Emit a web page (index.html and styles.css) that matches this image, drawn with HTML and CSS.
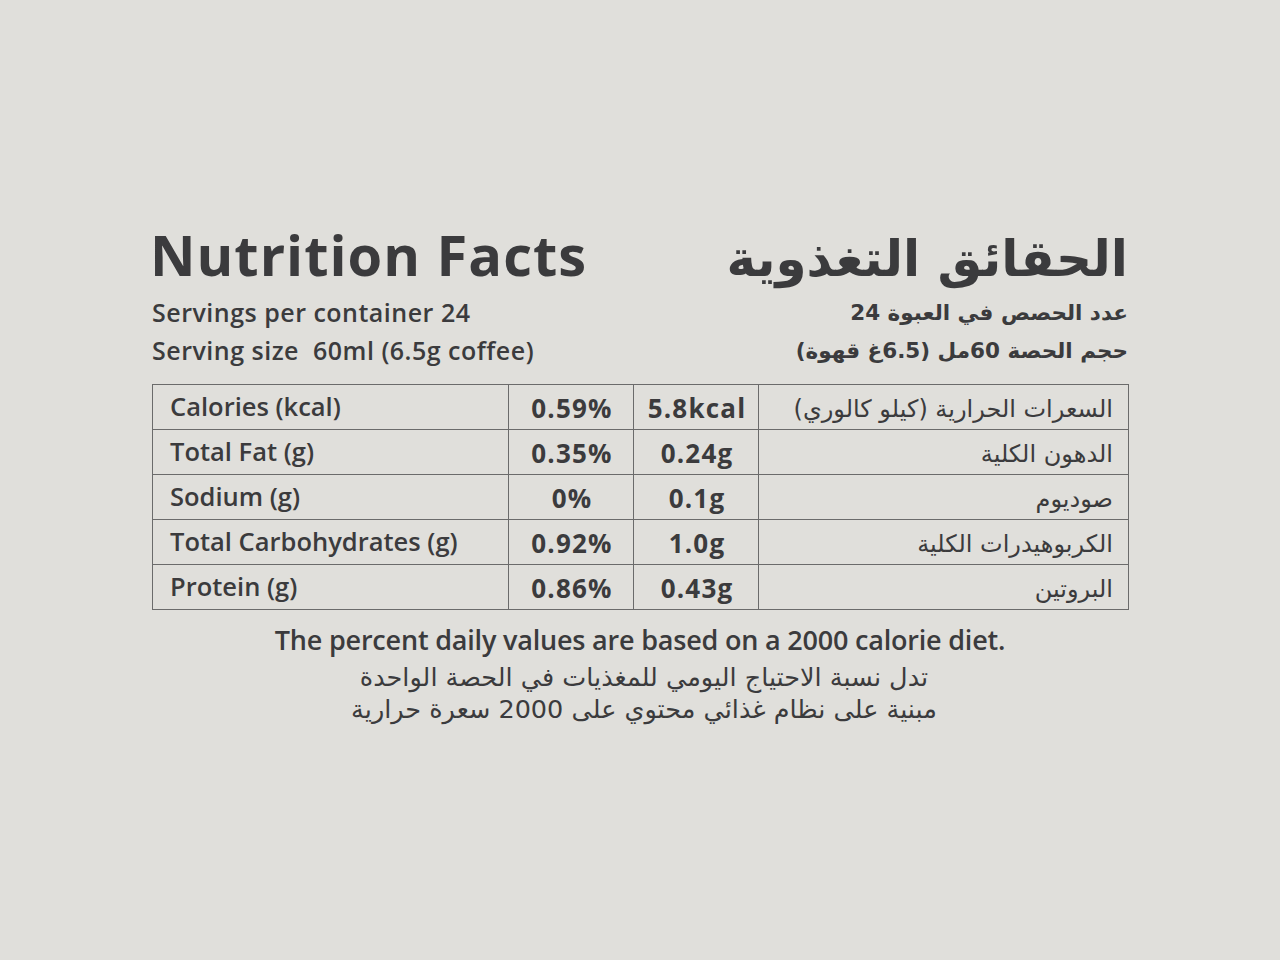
FILE: index.html
```html
<!DOCTYPE html>
<html lang="en">
<head>
<meta charset="utf-8">
<title>Nutrition Facts</title>
<link rel="stylesheet" href="styles.css">
</head>
<body>
<main class="label">
  <header class="head">
    <div class="head-en">
      <h1 class="title-en">Nutrition Facts</h1>
      <p class="sub-en first">Servings per container 24</p>
      <p class="sub-en">Serving size&nbsp; 60ml (6.5g coffee)</p>
    </div>
    <div class="head-ar" dir="rtl" lang="ar">
      <h2 class="title-ar">الحقائق التغذوية</h2>
      <p class="sub-ar first">عدد الحصص في العبوة 24</p>
      <p class="sub-ar">حجم الحصة 60مل (6.5غ قهوة)</p>
    </div>
  </header>

  <table class="facts">
    <colgroup>
      <col class="c-en"><col class="c-pct"><col class="c-val"><col class="c-ar">
    </colgroup>
    <tbody>
      <tr><td class="en">Calories (kcal)</td><td class="num">0.59%</td><td class="num">5.8kcal</td><td class="ar" dir="rtl" lang="ar">السعرات الحرارية (كيلو كالوري)</td></tr>
      <tr><td class="en">Total Fat (g)</td><td class="num">0.35%</td><td class="num">0.24g</td><td class="ar" dir="rtl" lang="ar">الدهون الكلية</td></tr>
      <tr><td class="en">Sodium (g)</td><td class="num">0%</td><td class="num">0.1g</td><td class="ar" dir="rtl" lang="ar">صوديوم</td></tr>
      <tr><td class="en">Total Carbohydrates (g)</td><td class="num">0.92%</td><td class="num">1.0g</td><td class="ar" dir="rtl" lang="ar">الكربوهيدرات الكلية</td></tr>
      <tr><td class="en">Protein (g)</td><td class="num">0.86%</td><td class="num">0.43g</td><td class="ar" dir="rtl" lang="ar">البروتين</td></tr>
    </tbody>
  </table>

  <footer class="note">
    <p class="note-en">The percent daily values are based on a 2000 calorie diet.</p>
    <p class="note-ar first" dir="rtl" lang="ar">تدل نسبة الاحتياج اليومي للمغذيات في الحصة الواحدة</p>
    <p class="note-ar" dir="rtl" lang="ar">مبنية على نظام غذائي محتوي على 2000 سعرة حرارية</p>
  </footer>
</main>
</body>
</html>
```

FILE: styles.css
```css
html, body {
  margin: 0;
  padding: 0;
  background: #e0dfdb;
}
body {
  width: 1280px;
  height: 960px;
  color: #3b3b3d;
  font-family: "Open Sans", "DejaVu Sans", sans-serif;
}
.label {
  width: 976px;
  margin: 0 0 0 152px;
  padding-top: 218px;
}
p, h1, h2 { margin: 0; }

.head {
  display: flex;
  justify-content: space-between;
  align-items: flex-start;
}
.title-en {
  font-size: 56px;
  font-weight: 700;
  line-height: 72px;
  letter-spacing: 1px;
  margin-left: -2px;
}
.sub-en {
  font-size: 25px;
  font-weight: 600;
  line-height: 38px;
  letter-spacing: 0.5px;
}
.sub-en.first { margin-top: 3px; }

.head-ar { text-align: right; }
.title-ar {
  font-family: "DejaVu Sans", sans-serif;
  font-size: 50px;
  font-weight: 700;
  line-height: 72px;
  margin-top: 5px;
}
.sub-ar {
  font-family: "DejaVu Sans", sans-serif;
  font-size: 21.5px;
  font-weight: 700;
  line-height: 38px;
}
.sub-ar.first { margin-top: -1px; }

.facts {
  margin-top: 14px;
  width: 976px;
  border-collapse: collapse;
  table-layout: fixed;
}
.c-en { width: 356px; }
.c-pct { width: 125px; }
.c-val { width: 125px; }
.c-ar { width: 370px; }
.facts td {
  box-sizing: border-box;
  border: 1.5px solid #6b6b6b;
  height: 45px;
  padding: 0 16px 0;
  line-height: 30px;
  vertical-align: middle;
  white-space: nowrap;
}
.facts .en {
  font-size: 25.5px;
  font-weight: 600;
  padding-left: 17px;
  padding-bottom: 2px;
}
.facts .num {
  text-align: center;
  font-size: 26px;
  font-weight: 700;
  letter-spacing: 1.2px;
  padding-left: 4px;
  padding-right: 2px;
  padding-top: 2px;
}
.facts .ar {
  text-align: right;
  font-family: "DejaVu Sans", sans-serif;
  font-size: 24px;
  font-weight: 400;
  padding-top: 4px;
  padding-right: 15px;
}

.note {
  text-align: center;
  margin-top: 13px;
}
.note-en {
  font-size: 27px;
  font-weight: 600;
  letter-spacing: -0.2px;
  line-height: 34px;
}
.note-ar {
  font-family: "DejaVu Sans", sans-serif;
  font-size: 25.5px;
  line-height: 32px;
  margin-left: 8px;
}
.note-ar.first { margin-top: 4px; }
```
